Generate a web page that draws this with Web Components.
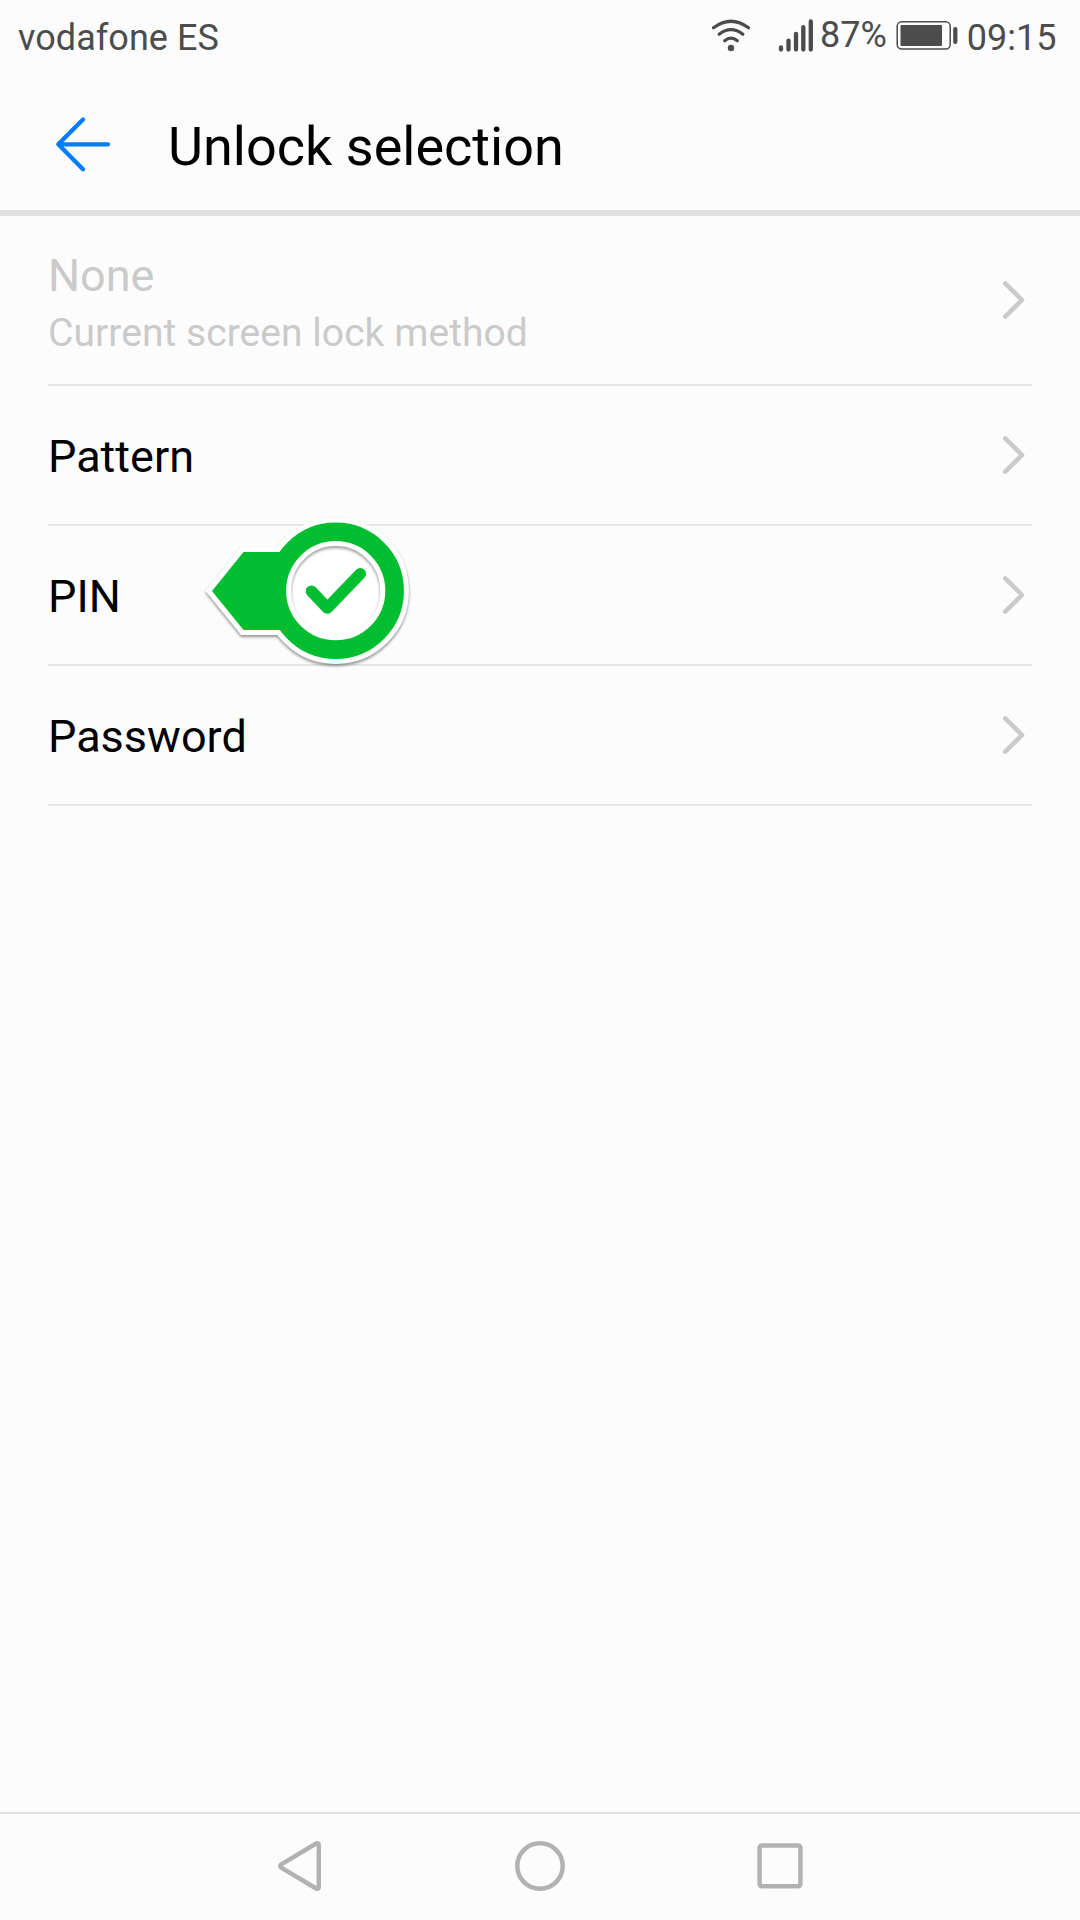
<!DOCTYPE html>
<html lang="en">
<head>
<meta charset="utf-8">
<title>Unlock selection</title>
<style>
  html, body { margin: 0; height: 100%; }
  body { background: #fcfcfc; font-family: Roboto, "Liberation Sans", sans-serif; color: #000; }
</style>
</head>
<body>
<phone-screen>
  <status-bar slot="top" carrier="vodafone ES" battery="87%" time="09:15"></status-bar>
  <title-bar slot="top">Unlock selection</title-bar>
  <option-row disabled>None<span slot="summary">Current screen lock method</span></option-row>
  <option-row>Pattern</option-row>
  <option-row>PIN<check-marker slot="marker"></check-marker></option-row>
  <option-row>Password</option-row>
  <nav-bar slot="bottom"></nav-bar>
</phone-screen>

<script>
class BaseElement extends HTMLElement {
  connectedCallback() {
    if (this.shadowRoot) return;
    const t = document.createElement('template');
    t.innerHTML = this.template();
    this.attachShadow({ mode: 'open' }).appendChild(t.content.cloneNode(true));
  }
}

class PhoneScreen extends BaseElement {
  template() {
    return `
<style>
  :host { display: flex; flex-direction: column; width: 1080px; height: 1920px; overflow: hidden; background: #fcfcfc; }
  main { flex: 1; display: flex; flex-direction: column; padding: 0 48px; }
</style>
<slot name="top"></slot>
<main><slot></slot></main>
<slot name="bottom"></slot>`;
  }
}
customElements.define('phone-screen', PhoneScreen);

class StatusBar extends BaseElement {
  template() {
    return `
<style>
  :host { display: flex; align-items: flex-start; height: 75px; flex: none; box-sizing: border-box; padding: 0 23.5px 0 18px; color: #4c4c4c; font-size: 36px; line-height: 76px; white-space: nowrap; }
  .carrier { flex: 1; letter-spacing: 0.05px; }
  .battery { line-height: 70px; margin: 0 9px 0 6px; }
  .time { margin-left: 9px; }
  svg { display: block; flex: none; }
  .wifi { margin-right: 26px; }
</style>
<span class="carrier">${this.getAttribute('carrier')}</span>
<svg class="wifi" width="42" height="75" viewBox="711 0 42 75" fill="none" stroke="#4c4c4c" stroke-width="3.3" stroke-linecap="round">
  <path d="M714.5 27.8Q732 14.6 749.5 27.8M720.2 34.2Q732 25 743.8 34.2M725.7 40.8Q732 35.5 738.3 40.8"/>
  <circle cx="732" cy="48" r="3.2" fill="#4c4c4c" stroke="none"/>
</svg>
<svg width="36" height="75" viewBox="779 0 36 75" fill="none" stroke="#4c4c4c" stroke-width="4.3" stroke-linecap="round">
  <path d="M782 47.4V49.6M789.5 40.6V49.6M797 34V49.6M804.3 27.2V49.6M811.8 21.4V49.6"/>
</svg>
<span class="battery">${this.getAttribute('battery')}</span>
<svg width="62" height="75" viewBox="895 0 62 75">
  <rect x="896.2" y="21.8" width="53" height="27.2" rx="4.5" fill="none" stroke="#4c4c4c" stroke-width="1.5"/>
  <rect x="899.5" y="25" width="41.5" height="21" rx="1" fill="#4c4c4c"/>
  <rect x="952.2" y="27" width="4.2" height="17" rx="2" fill="#4c4c4c"/>
</svg>
<span class="time">${this.getAttribute('time')}</span>`;
  }
}
customElements.define('status-bar', StatusBar);

class TitleBar extends BaseElement {
  template() {
    return `
<style>
  :host { display: flex; align-items: center; flex: none; box-sizing: border-box; height: 141px; padding: 0 54px; border-bottom: 6px solid #e1e1e1; font-size: 54px; line-height: 64px; white-space: nowrap; }
  svg { display: block; margin-right: 56px; }
  span { padding-top: 8px; }
</style>
<svg width="58" height="60" viewBox="54 112.5 58 60" fill="none" stroke="#007dff" stroke-width="4.3" stroke-linecap="round" stroke-linejoin="round">
  <path d="M83 119 58.3 143.8 83 168.8M58.3 143.8H108"/>
</svg>
<span><slot></slot></span>`;
  }
}
customElements.define('title-bar', TitleBar);

class OptionRow extends BaseElement {
  template() {
    return `
<style>
  :host { position: relative; display: flex; align-items: center; justify-content: space-between; flex: none; box-sizing: border-box; height: 140px; border-bottom: 2px solid #e6e6e6; font-size: 45px; line-height: 58px; }
  :host([disabled]) { height: 170px; color: #cacaca; }
  .text { padding-top: 3px; }
  :host([disabled]) .text { padding-top: 7px; }
  .summary { font-size: 39px; line-height: 56px; letter-spacing: 0.05px; }
  .chevron { display: block; margin-right: 6px; }
  ::slotted([slot="marker"]) { position: absolute; left: 142px; top: -21px; z-index: 1; }
</style>
<div class="text">
  <div><slot></slot></div>
  <div class="summary"><slot name="summary"></slot></div>
</div>
<slot name="marker"></slot>
<svg class="chevron" width="24" height="40" viewBox="0 0 24 40" fill="none" stroke="#cacaca" stroke-width="4.5" stroke-linecap="round" stroke-linejoin="round">
  <path d="M3.2 3.3 20 20 3.2 36.7"/>
</svg>`;
  }
}
customElements.define('option-row', OptionRow);

// green pointer with a tick, lies over the row it marks
class CheckMarker extends BaseElement {
  template() {
    return `
<style>
  :host { display: block; width: 240px; height: 175px; }
  svg { display: block; overflow: visible; }
  .outer { filter: drop-shadow(0 2px 1.5px rgba(0,0,0,.42)); }
  .ring { filter: drop-shadow(0 2px 1.5px rgba(0,0,0,.4)); }
</style>
<svg width="240" height="175" viewBox="190 505 240 175">
  <g class="outer" fill="#fff" stroke="#fff" stroke-width="10">
    <path d="M212 591 243.5 552H300V630H243.5Z"/>
    <circle cx="335.7" cy="590.7" r="68.2"/>
  </g>
  <path d="M212 591 243.5 552H300V630H243.5Z" fill="#00be2f"/>
  <circle cx="335.7" cy="590.7" r="50" fill="#fff"/>
  <circle class="ring" cx="335.7" cy="590.7" r="47.4" fill="none" stroke="#fff" stroke-width="5.6"/>
  <circle cx="335.7" cy="590.7" r="58.9" fill="none" stroke="#00be2f" stroke-width="18.6"/>
  <path d="M311.5 591.3 327.3 608 360.3 573.8" fill="none" stroke="#00be2f" stroke-width="11.6" stroke-linecap="round" stroke-linejoin="round"/>
</svg>`;
  }
}
customElements.define('check-marker', CheckMarker);

class NavBar extends BaseElement {
  template() {
    return `
<style>
  :host { display: grid; grid-template-columns: repeat(3, 240px); justify-content: center; align-items: center; justify-items: center; flex: none; box-sizing: border-box; height: 108px; padding-bottom: 2px; border-top: 2px solid #e1e1e1; }
  svg { display: block; }
</style>
<svg width="52" height="52" viewBox="0 0 52 52" fill="none" stroke="#b2b2b2" stroke-width="4.5" stroke-linejoin="round"><path d="M7.2 24.4 42.2 3.5Q44.8 2.7 44.8 5V47Q44.8 49.3 42.2 48.5L7.2 27.6Q5.6 26 7.2 24.4Z"/></svg>
<svg width="52" height="52" viewBox="0 0 52 52" fill="none" stroke="#b2b2b2" stroke-width="4.5"><circle cx="26" cy="26" r="22.7"/></svg>
<svg width="52" height="52" viewBox="0 0 52 52" fill="none" stroke="#b2b2b2" stroke-width="4.5"><rect x="5.6" y="5.4" width="40.8" height="40.8" rx="2.2"/></svg>`;
  }
}
customElements.define('nav-bar', NavBar);
</script>
</body>
</html>
